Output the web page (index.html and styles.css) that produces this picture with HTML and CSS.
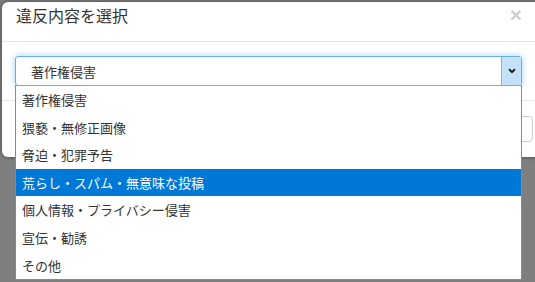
FILE: index.html
```html
<!DOCTYPE html>
<html lang="ja">
<head>
<meta charset="utf-8">
<link rel="stylesheet" href="styles.css">
</head>
<body>
<div class="modal">
  <div class="modal-header">
    <h4 class="modal-title">違反内容を選択</h4>
    <span class="close">×</span>
  </div>
  <div class="modal-body">
    <div class="select">
      <span class="select-value">著作権侵害</span>
      <span class="select-arrow">
        <svg width="8" height="6" viewBox="0 0 8 6"><path d="M1 1.2 L4 4.2 L7 1.2" fill="none" stroke="#111" stroke-width="1.8"/></svg>
      </span>
      <ul class="options">
        <li>著作権侵害</li>
        <li>猥褻・無修正画像</li>
        <li>脅迫・犯罪予告</li>
        <li class="active">荒らし・スパム・無意味な投稿</li>
        <li>個人情報・プライバシー侵害</li>
        <li>宣伝・勧誘</li>
        <li>その他</li>
      </ul>
    </div>
  </div>
  <div class="modal-footer">
    <button class="btn">キャンセル</button>
  </div>
</div>
</body>
</html>
```
FILE: styles.css
```css
html, body {
  margin: 0;
  height: 100%;
  overflow: hidden;
}
body {
  background: #7f7f7f;
  font-family: "Noto Sans CJK JP", "Noto Sans", sans-serif;
  color: #333;
  position: relative;
}
.modal {
  position: absolute;
  left: 2px;
  top: 2px;
  width: 546px;
  background: #fff;
  border-radius: 6px;
  box-shadow: 0 0 4px rgba(0,0,0,.5);
}
.modal-header {
  display: flex;
  justify-content: space-between;
  align-items: flex-start;
  height: 40px;
  padding: 0 26px 0 14px;
  border-bottom: 1px solid #e5e5e5;
  box-sizing: border-box;
}
.modal-title {
  margin: 0;
  padding-top: 1px;
  font-size: 16px;
  font-weight: normal;
  line-height: 24px;
  color: #333;
}
.close {
  font-family: "Liberation Sans", Arial, sans-serif;
  font-size: 21px;
  font-weight: bold;
  line-height: 21px;
  padding-top: 2px;
  color: #cfcfcf;
}
.modal-body {
  padding: 14px 26px 14px 13px;
}
.select {
  position: relative;
  height: 30px;
  border: 1px solid #66afe9;
  border-radius: 3px;
  box-shadow: 0 0 6px rgba(102,175,233,.6);
  display: flex;
  align-items: center;
  justify-content: space-between;
  box-sizing: border-box;
}
.select-value {
  font-size: 13px;
  padding-left: 15px;
  color: #333;
}
.select-arrow {
  align-self: stretch;
  width: 19px;
  background: #c4e2f7;
  border-left: 1px solid #7eb4ea;
  display: flex;
  align-items: center;
  justify-content: center;
}
.options {
  position: absolute;
  left: -1px;
  right: -1px;
  top: 28px;
  margin: 0;
  padding: 0;
  list-style: none;
  background: #fff;
  border: 1px solid #8a8a8a;
  border-top-color: #a0a0a0;
}
.options li {
  height: 27.6px;
  line-height: 27.6px;
  padding-left: 6px;
  font-size: 13px;
  color: #333;
}
.options li.active {
  background: #0078d7;
  color: #fff;
}
.modal-footer {
  border-top: 1px solid #e5e5e5;
  padding: 15px 15px 15px 0;
  display: flex;
  justify-content: flex-end;
}
.btn {
  height: 26px;
  padding: 0 12px;
  font-family: inherit;
  font-size: 13px;
  background: #fff;
  color: #333;
  border: 1px solid #ccc;
  border-radius: 4px;
}
```
